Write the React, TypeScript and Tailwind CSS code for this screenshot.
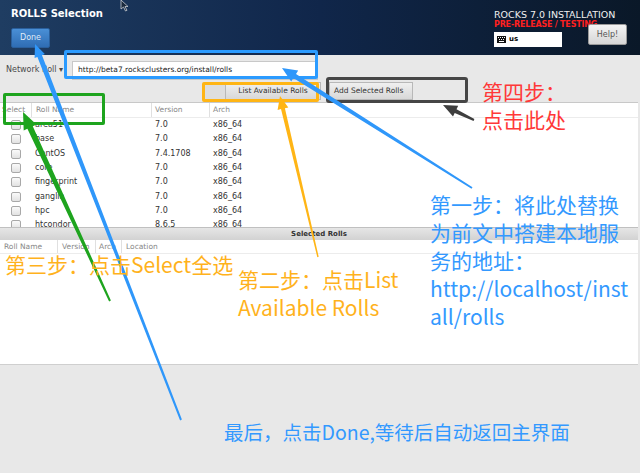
import React from "react";

type Pt = [number, number];

// tapered arrow: thin tail, wider shaft near the head, triangular head at tip
function arrow(tail: Pt, tip: Pt, tailW: number, shaftW: number, headL: number, headW: number) {
  const dx = tip[0] - tail[0];
  const dy = tip[1] - tail[1];
  const len = Math.hypot(dx, dy);
  const ux = dx / len;
  const uy = dy / len;
  const nx = -uy;
  const ny = ux;
  const bx = tip[0] - ux * headL;
  const by = tip[1] - uy * headL;
  const p = (x: number, y: number) => `${x.toFixed(1)},${y.toFixed(1)}`;
  return [
    p(tail[0] + (nx * tailW) / 2, tail[1] + (ny * tailW) / 2),
    p(bx + (nx * shaftW) / 2, by + (ny * shaftW) / 2),
    p(bx + (nx * headW) / 2, by + (ny * headW) / 2),
    p(tip[0], tip[1]),
    p(bx - (nx * headW) / 2, by - (ny * headW) / 2),
    p(bx - (nx * shaftW) / 2, by - (ny * shaftW) / 2),
    p(tail[0] - (nx * tailW) / 2, tail[1] - (ny * tailW) / 2),
  ].join(" ");
}

const rolls = [
  { name: "area51", version: "7.0" },
  { name: "base", version: "7.0" },
  { name: "CentOS", version: "7.4.1708" },
  { name: "core", version: "7.0" },
  { name: "fingerprint", version: "7.0" },
  { name: "ganglia", version: "7.0" },
  { name: "hpc", version: "7.0" },
  { name: "htcondor", version: "8.6.5" },
];

const ui = { fontFamily: '"DejaVu Sans", "Liberation Sans", sans-serif' };
const cjk = { fontFamily: '"Noto Sans CJK SC", "Noto Sans", sans-serif' };

export default function App() {
  return (
    <div className="relative w-[640px] h-[473px] overflow-hidden bg-[#e8e8e8]" style={ui}>
      {/* header */}
      <div className="h-[55px] flex justify-between bg-gradient-to-r from-[#1f3d62] via-[#10264a] to-[#0a1828]">
        <div className="pl-[11px] pt-[7px] flex flex-col">
          <span className="text-[10px] font-bold text-white leading-[13px]">ROLLS Selection</span>
          <button className="mt-[8px] w-[39px] h-[20px] rounded-[2px] bg-gradient-to-b from-[#4a8fd6] to-[#2f6db4] text-[8px] text-[#dfeaf8] border border-[#2a5f9c]">
            Done
          </button>
        </div>
        <div className="pr-[13px] pt-[9px] flex flex-col w-[146px]">
          <span className="text-[9.5px] text-[#f0f0f0] leading-[11px] whitespace-nowrap">ROCKS 7.0 INSTALLATION</span>
          <span className="text-[8px] font-bold text-[#ff2020] leading-[10px] tracking-[-0.2px] whitespace-nowrap">PRE-RELEASE / TESTING</span>
          <div className="flex justify-between items-start">
            <div className="mt-[2px] w-[68px] h-[15px] bg-white flex items-center gap-[3px] px-[3px]">
              <svg width="9" height="7" viewBox="0 0 9 7">
                <rect x="0" y="0" width="9" height="7" fill="#111" />
                <rect x="1" y="1" width="1" height="1" fill="#fff" />
                <rect x="3" y="1" width="1" height="1" fill="#fff" />
                <rect x="5" y="1" width="1" height="1" fill="#fff" />
                <rect x="7" y="1" width="1" height="1" fill="#fff" />
                <rect x="2" y="3" width="1" height="1" fill="#fff" />
                <rect x="4" y="3" width="1" height="1" fill="#fff" />
                <rect x="6" y="3" width="1" height="1" fill="#fff" />
                <rect x="2" y="5" width="5" height="1" fill="#fff" />
              </svg>
              <span className="text-[7px] font-bold text-black">us</span>
            </div>
            <button className="-mt-[6px] w-[39px] h-[21px] rounded-[2px] bg-gradient-to-b from-[#f4f4f4] to-[#d6d6d6] border border-[#9a9a9a] text-[8px] text-[#555]">
              Help!
            </button>
          </div>
        </div>
      </div>

      {/* toolbar */}
      <div className="h-[47px] flex flex-col bg-[#e8e8e8]">
        <div className="mt-[5px] h-[20px] flex items-center">
          <span className="ml-[6px] w-[66px] text-[8px] text-[#4a4a4a] whitespace-nowrap">Network Roll ▾</span>
          <div className="w-[246px] h-[19px] bg-white border border-[#c8c8c8] flex items-center pl-[5px]">
            <span className="text-[7.5px] text-[#222] whitespace-nowrap">http://beta7.rocksclusters.org/install/rolls</span>
          </div>
        </div>
        <div className="mt-[2px] h-[19px] flex">
          <div className="ml-[203px] w-[22px] h-[18px] bg-[#dedede]" />
          <button className="w-[96px] h-[18px] bg-gradient-to-b from-[#f0f0f0] to-[#d8d8d8] border border-[#b8b8b8] text-[7.5px] text-[#333]">
            List Available Rolls
          </button>
          <button className="ml-[8px] w-[84px] h-[18px] bg-gradient-to-b from-[#f0f0f0] to-[#d8d8d8] border border-[#b8b8b8] text-[7.5px] text-[#333] text-left pl-[4px]">
            Add Selected Rolls
          </button>
        </div>
      </div>

      {/* available rolls table */}
      <div className="mr-[2px] h-[125px] bg-white border-t border-[#c8c8c8] overflow-hidden">
        <div className="h-[15px] grid grid-cols-[32px_120px_58px_1fr] border-b border-[#ececec] text-[7.5px] text-[#888]">
          <div className="flex items-center pl-[2px] border-r border-[#e0e0e0]">Select</div>
          <div className="flex items-center pl-[4px] border-r border-[#e0e0e0]">Roll Name</div>
          <div className="flex items-center pl-[3px] border-r border-[#e0e0e0]">Version</div>
          <div className="flex items-center pl-[3px]">Arch</div>
        </div>
        {rolls.map((r) => (
          <div key={r.name} className="h-[14.3px] grid grid-cols-[32px_120px_58px_1fr] text-[8px] text-[#333]">
            <div className="flex items-center pl-[11px]">
              <div className="w-[10px] h-[10px] rounded-[2px] border border-[#a8a8a8] bg-gradient-to-b from-[#fafafa] to-[#e2e2e2]" />
            </div>
            <div className="flex items-center pl-[3px]">{r.name}</div>
            <div className="flex items-center pl-[3px]">{r.version}</div>
            <div className="flex items-center pl-[3px]">x86_64</div>
          </div>
        ))}
      </div>

      {/* selected rolls */}
      <div className="mr-[2px] h-[13px] flex items-center justify-center bg-gradient-to-b from-[#e6e6e6] to-[#d2d2d2] border-t border-[#c0c0c0] text-[7px] font-bold text-[#333]">
        Selected Rolls
      </div>
      <div className="mr-[2px] h-[125px] bg-white border-b border-[#cfcfcf]">
        <div className="h-[14px] grid grid-cols-[58px_38px_26px_1fr] border-b border-[#ececec] text-[7.5px] text-[#888]">
          <div className="flex items-center pl-[4px] border-r border-[#e0e0e0]">Roll Name</div>
          <div className="flex items-center pl-[4px] border-r border-[#e0e0e0]">Version</div>
          <div className="flex items-center pl-[3px] border-r border-[#e0e0e0]">Arch</div>
          <div className="flex items-center pl-[4px]">Location</div>
        </div>
      </div>

      {/* mouse cursor */}
      <svg className="absolute left-[120px] top-0" width="10" height="12" viewBox="0 0 10 12">
        <path d="M1 0 L1 9 L3.5 7 L5.5 11 L7 10.3 L5 6.5 L8 6.5 Z" fill="#1a2a3e" stroke="#c8ccd2" strokeWidth="0.8" />
      </svg>

      {/* annotations */}
      <div className="absolute left-[64px] top-[50px] w-[254px] h-[29px] border-[3px] border-[#2b9bff] rounded-[2px]" />
      <div className="absolute left-[3px] top-[93px] w-[102px] h-[32px] border-[3px] border-[#1ea41e] rounded-[2px]" />
      <div className="absolute left-[202px] top-[82px] w-[117px] h-[20px] border-[3px] border-[#ffb515] rounded-[2px]" />
      <div className="absolute left-[326px] top-[77px] w-[142px] h-[26px] border-[3px] border-[#464646] rounded-[3px]" />

      <svg className="absolute left-0 top-0" width="640" height="473" viewBox="0 0 640 473">
        <polygon points={arrow([181, 420], [35, 44], 2, 5, 13, 11)} fill="#2f97fa" />
        <polygon points={arrow([110, 301], [23, 112], 2, 6, 17, 14)} fill="#1ea41e" />
        <polygon points={arrow([472, 188], [282, 68], 2, 5, 15, 13)} fill="#2f97fa" />
        <polygon points={arrow([318, 257], [280, 96], 1.5, 4, 13, 11)} fill="#ffb515" />
        <polygon points={arrow([474, 120], [443, 105], 2, 4, 14, 12)} fill="#3e3e3e" />
      </svg>

      <div className="absolute left-[482px] top-[77px] text-[21px] leading-[28px] text-[#ff3838]" style={cjk}>
        <div>第四步：</div>
        <div>点击此处</div>
      </div>
      <div className="absolute left-[430px] top-[190px] text-[21px] leading-[28px] text-[#3399ff]" style={cjk}>
        <div>第一步：将此处替换</div>
        <div>为前文中搭建本地服</div>
        <div>务的地址：</div>
        <div>http://localhost/inst</div>
        <div>all/rolls</div>
      </div>
      <div className="absolute left-[5px] top-[250px] text-[21px] leading-[28px] text-[#ffb21c]" style={cjk}>
        第三步：点击Select全选
      </div>
      <div className="absolute left-[238px] top-[265px] text-[21px] leading-[28px] text-[#ffb21c]" style={cjk}>
        <div>第二步：点击List</div>
        <div>Available Rolls</div>
      </div>
      <div className="absolute left-[224px] top-[418px] text-[19.5px] leading-[28px] text-[#3399ff]" style={cjk}>
        最后，点击Done,等待后自动返回主界面
      </div>
    </div>
  );
}
